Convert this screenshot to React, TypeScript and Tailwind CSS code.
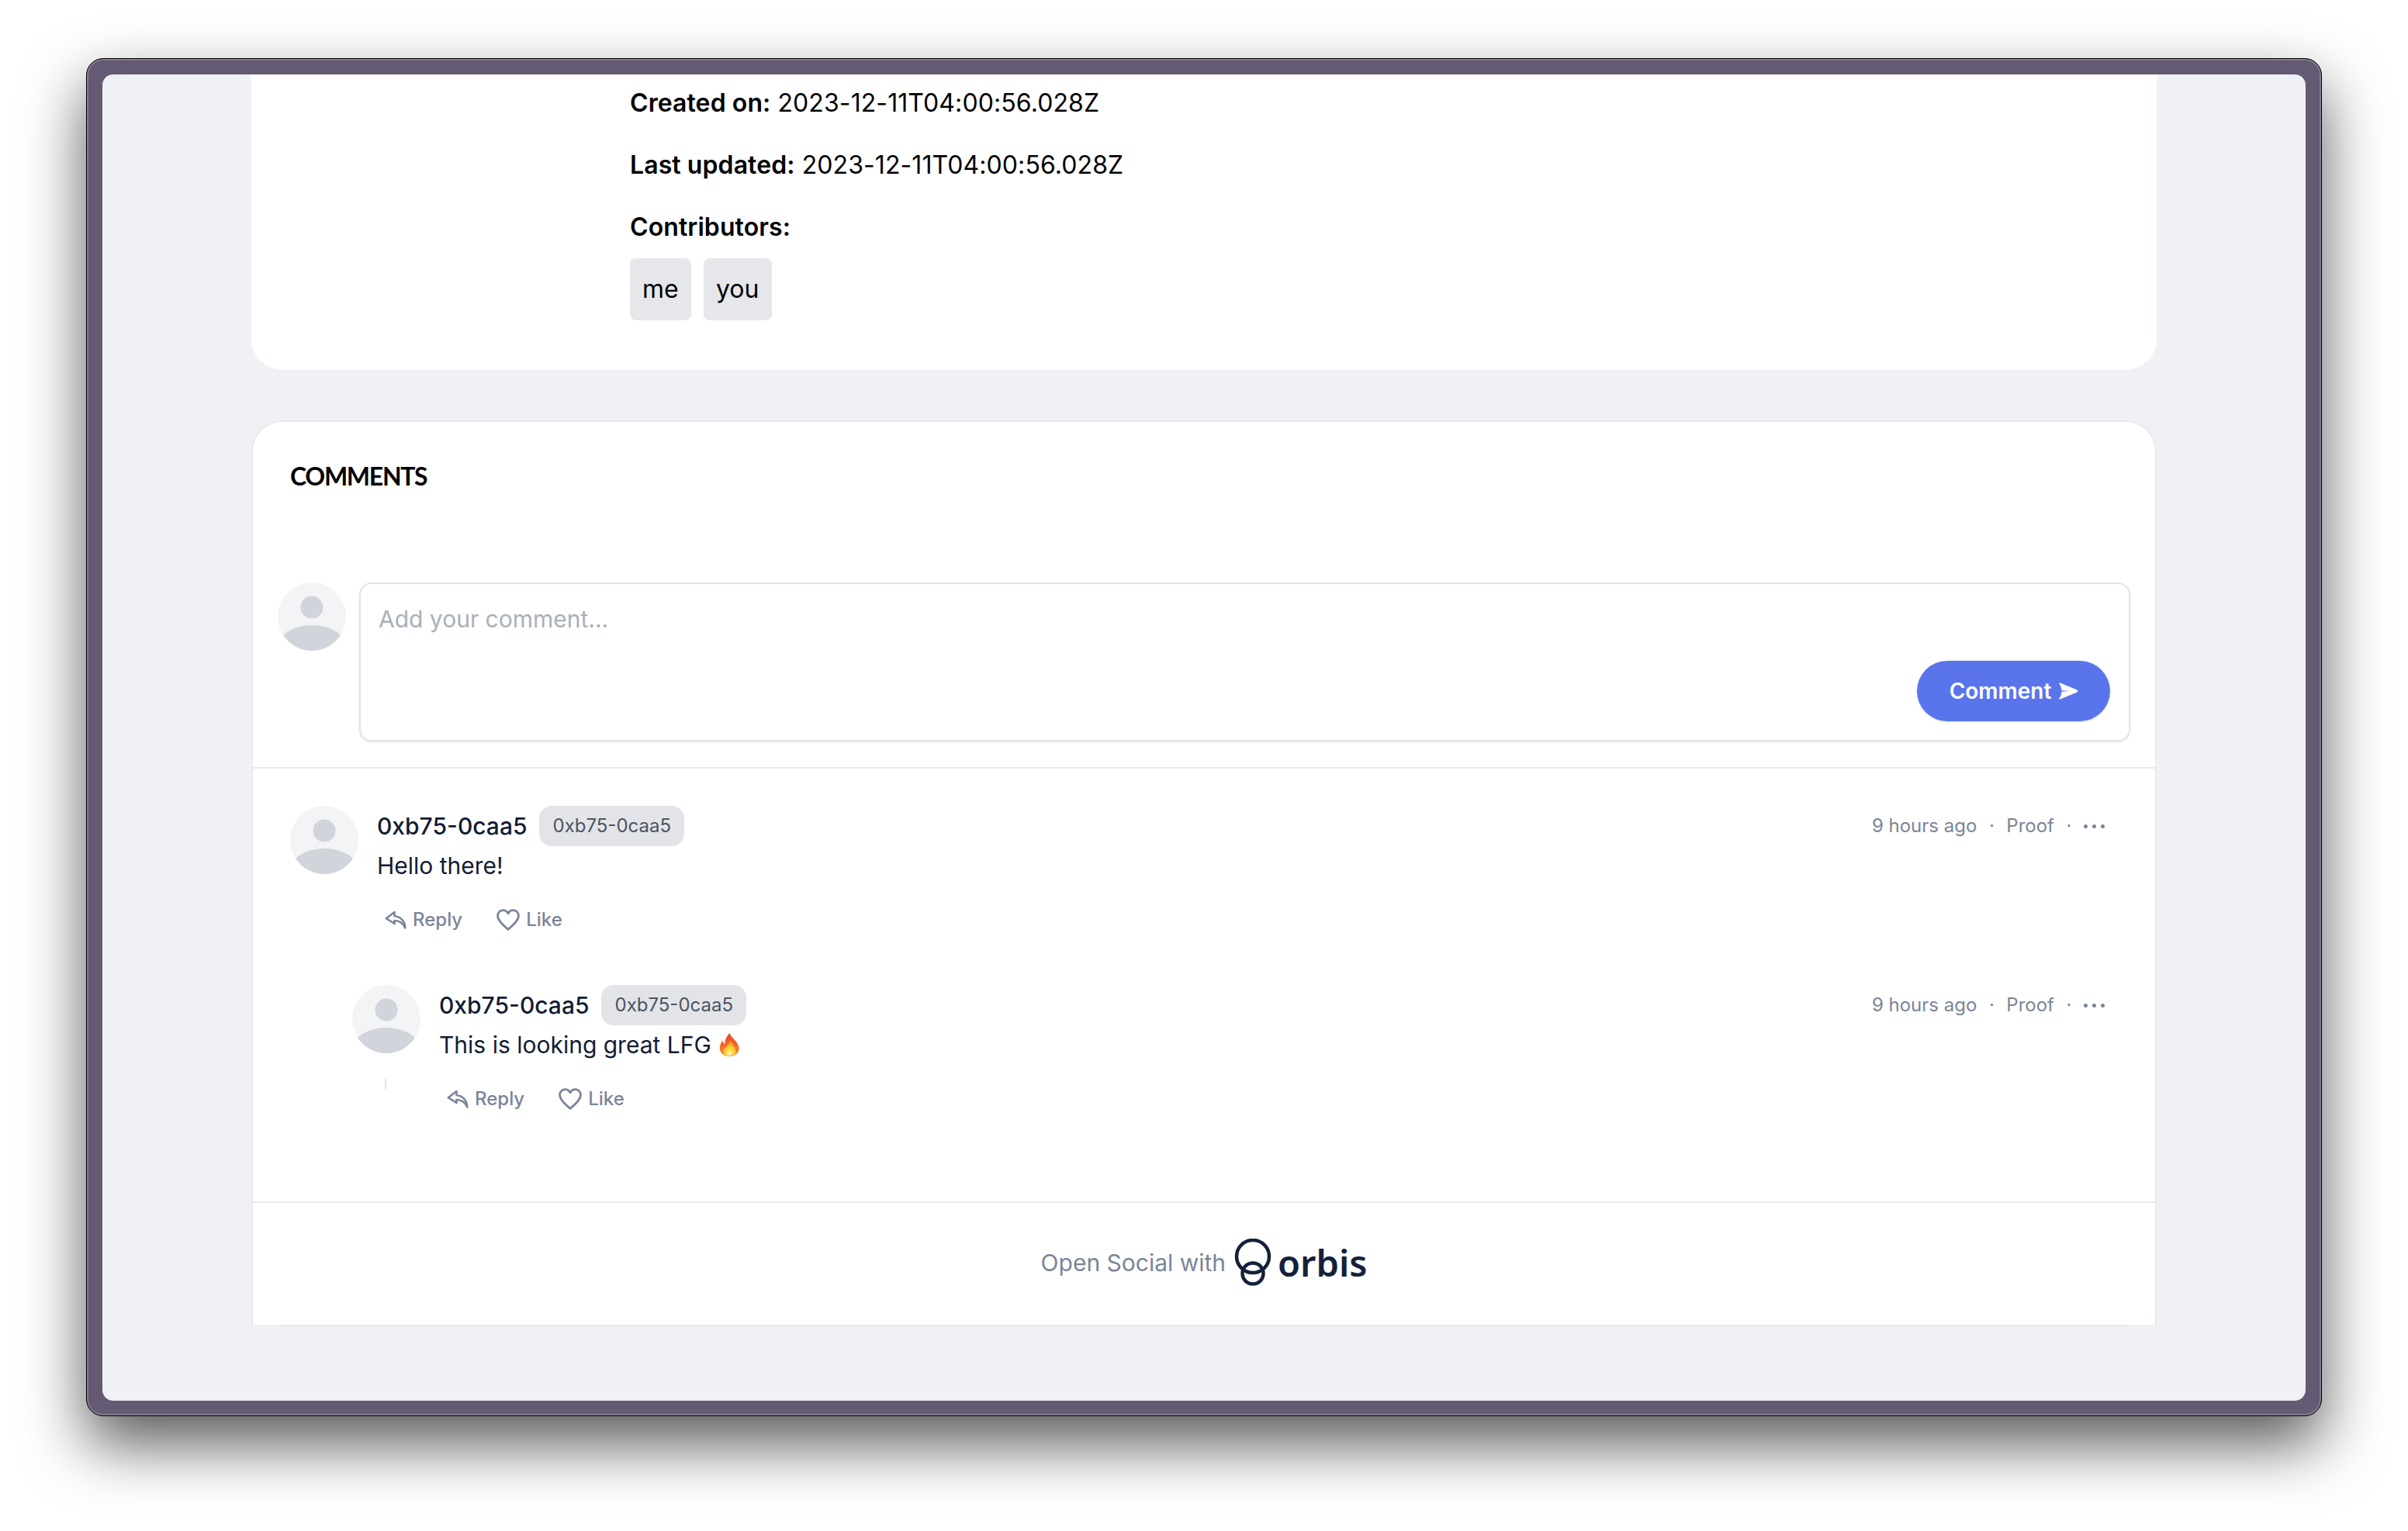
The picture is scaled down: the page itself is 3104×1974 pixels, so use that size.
import React from "react";

function Avatar() {
  return (
    <svg width="88" height="88" viewBox="0 0 88 88" className="shrink-0">
      <circle cx="44" cy="44" r="44" fill="#f3f4f6" />
      <circle cx="44" cy="32" r="14.5" fill="#d1d5db" />
      <path d="M7.1 68 C16 59 30 55 44 55 C58 55 72 59 80.9 68 A44 44 0 0 1 7.1 68 Z" fill="#d1d5db" />
    </svg>
  );
}

function ReplyIcon() {
  return (
    <svg width="28" height="24" viewBox="0 0 28 24" fill="none" stroke="#7a8599" strokeWidth="2.6" strokeLinejoin="round" strokeLinecap="round">
      <path d="M12.5 2 L1.8 10.2 L12.5 17 V13 C18.5 13 23.5 16 26.3 22.5 C26.3 14 20.5 8 12.5 7 Z" />
    </svg>
  );
}

function HeartIcon() {
  return (
    <svg width="30" height="28" viewBox="0 0 30 28" fill="none" stroke="#7a8599" strokeWidth="2.8" strokeLinejoin="round">
      <path d="M15 26.3 C9 21.5 1.6 15 1.6 8.8 C1.6 4.6 4.6 1.6 8.4 1.6 C11 1.6 13.6 3 15 5.8 C16.4 3 19 1.6 21.6 1.6 C25.4 1.6 28.4 4.6 28.4 8.8 C28.4 15 21 21.5 15 26.3 Z" />
    </svg>
  );
}

function Flame() {
  return (
    <svg width="26" height="30" viewBox="0 0 26 30" className="inline-block ml-[10px] align-[-4px]">
      <defs>
        <linearGradient id="flameOuter" x1="0" y1="0" x2="0" y2="1">
          <stop offset="0" stopColor="#e8452c" />
          <stop offset="0.55" stopColor="#f4682a" />
          <stop offset="1" stopColor="#f79a2a" />
        </linearGradient>
        <radialGradient id="flameInner" cx="0.5" cy="0.85" r="0.75">
          <stop offset="0" stopColor="#fff6d0" />
          <stop offset="0.4" stopColor="#fdd835" />
          <stop offset="1" stopColor="#fb9a26" />
        </radialGradient>
      </defs>
      <path d="M13.5 0 C15 6 24 10 25.5 18.5 C26.5 25.5 20 30 13 30 C5.5 30 0 25 0.8 18 C1.2 14 3 12 4.5 9.5 C5 12 6 13.5 7.5 14 C7 9 9.5 4 13.5 0 Z" fill="url(#flameOuter)" />
      <path d="M14.5 9 C15.5 14 21.5 17 21.5 23 C21.5 27 18 29.5 13 29.5 C8 29.5 5 27 5.5 23 C6 19.5 8.5 19 10.5 16 C12 14.5 13.5 12 14.5 9 Z" fill="url(#flameInner)" />
    </svg>
  );
}

function Comment({ text, emoji }: { text: string; emoji?: boolean }) {
  return (
    <div className="flex items-start">
      <div className="flex flex-col items-center shrink-0">
        <Avatar />
        {emoji && <div className="w-[2px] h-4 mt-8 -translate-x-px bg-[#e5e7eb]" />}
      </div>
      <div className="ml-6 flex-1">
        <div className="flex items-center h-[52px]">
          <span className="text-[30px] leading-[48px] font-medium text-[#111c33]">0xb75-0caa5</span>
          <span className="ml-4 h-[52px] px-[17px] flex items-center rounded-2xl bg-[#e2e4e8] text-[24px] text-[#4b5563]">0xb75-0caa5</span>
          <div className="ml-auto flex items-center text-[24px] text-[#7a8599]">
            <span>9 hours ago</span>
            <span className="w-[38px] text-center">·</span>
            <span>Proof</span>
            <span className="w-[38px] text-center">·</span>
            <span className="flex gap-[6px]">
              <i className="w-[5px] h-[5px] rounded-full bg-[#7a8599]" />
              <i className="w-[5px] h-[5px] rounded-full bg-[#7a8599]" />
              <i className="w-[5px] h-[5px] rounded-full bg-[#7a8599]" />
            </span>
          </div>
        </div>
        <p className="mt-px text-[30px] leading-[48px] text-[#111c33]">
          {text}
          {emoji && <Flame />}
        </p>
        <div className="mt-[22px] h-12 flex items-center pl-[10px] text-[24px] font-medium text-[#7a8599]">
          <ReplyIcon />
          <span className="ml-2">Reply</span>
          <span className="ml-[44px]"><HeartIcon /></span>
          <span className="ml-2">Like</span>
        </div>
      </div>
    </div>
  );
}

export default function App() {
  return (
    <div className="w-[3104px] h-[1974px] pt-[75px] pl-[111px] bg-white overflow-hidden font-['Inter',sans-serif]">
      <div className="w-[2882px] h-[1751px] p-5 rounded-[22px] border border-black bg-[#655a73] shadow-[0_36px_80px_rgba(0,0,0,0.65),inset_0_0_0_2px_#857b90]">
        <div className="h-[1710px] rounded-[14px] overflow-hidden bg-[#eff1f5] px-[192px]">
          <div className="h-[381px] bg-white rounded-b-[40px] pl-[488px] pt-[13px] text-[32px] leading-[48px] tracking-[0.09px] text-black">
            <p className="mb-8"><b className="font-semibold">Created on:</b> 2023-12-11T04:00:56.028Z</p>
            <p className="mb-8"><b className="font-semibold">Last updated:</b> 2023-12-11T04:00:56.028Z</p>
            <p className="mb-4"><b className="font-semibold">Contributors:</b></p>
            <div className="flex gap-4">
              <span className="h-20 px-4 flex items-center rounded-lg bg-[#e5e7eb]">me</span>
              <span className="h-20 px-4 flex items-center rounded-lg bg-[#e5e7eb]">you</span>
            </div>
          </div>

          <div className="mt-[65px] bg-white border-2 border-b-0 border-[#e9eaee] rounded-t-[40px] h-[1166px] flex flex-col">
            <h2 className="pl-12 pt-[50px] pb-[2px] text-[32px] leading-10 tracking-[-1.3px] font-bold font-['Lato',sans-serif] text-black">COMMENTS</h2>

            <div className="flex items-start gap-[17px] mt-[115px] px-8">
              <Avatar />
              <div className="relative flex-1 h-[205px] rounded-2xl border-2 border-[#e3e4e9] shadow-sm pl-[23px] pt-[23px] text-[30px] leading-[44px] text-[#aab0ba]">
                Add your comment...
                <button className="absolute right-6 bottom-6 h-[78px] w-[249px] rounded-full bg-[#5a75ec] shadow-sm text-white text-[28px] font-semibold flex items-center justify-center gap-[10px]">
                  Comment
                  <svg width="24" height="22" viewBox="0 0 24 22" fill="white">
                    <path d="M1 0.3 L23.5 9.5 Q25 11 23.5 12.5 L1 21.7 Q0 21.7 0.5 20.5 C2.5 17.5 3.5 14.5 3.5 11.7 L15 11 L3.5 10.3 C3.5 7.5 2.5 4.5 0.5 1.5 Q0 0.3 1 0.3 Z" />
                  </svg>
                </button>
              </div>
            </div>

            <div className="mt-[33px] flex-1 border-t-2 border-[#e9eaee] pt-12 pl-12 pr-[65px]">
              <Comment text="Hello there!" />
              <div className="mt-[60px] pl-20">
                <Comment text="This is looking great LFG" emoji />
              </div>
            </div>

            <div className="h-[159px] border-t-2 border-[#e9eaee] flex items-center justify-center pb-[3px]">
              <span className="text-[30px] text-[#7a8599]">Open Social with</span>
              <svg width="48" height="62" viewBox="0 0 48 62" fill="none" stroke="#14213a" strokeWidth="4.5" className="ml-[11px]">
                <circle cx="24" cy="23" r="21" />
                <circle cx="24" cy="45" r="13.5" />
              </svg>
              <span className="ml-2 text-[47px] leading-none font-semibold font-['Noto_Sans',sans-serif] text-[#14213a]">orbis</span>
            </div>
          </div>
          <div className="h-[2px] mx-9 bg-[#e9eaee]" />
        </div>
      </div>
    </div>
  );
}
